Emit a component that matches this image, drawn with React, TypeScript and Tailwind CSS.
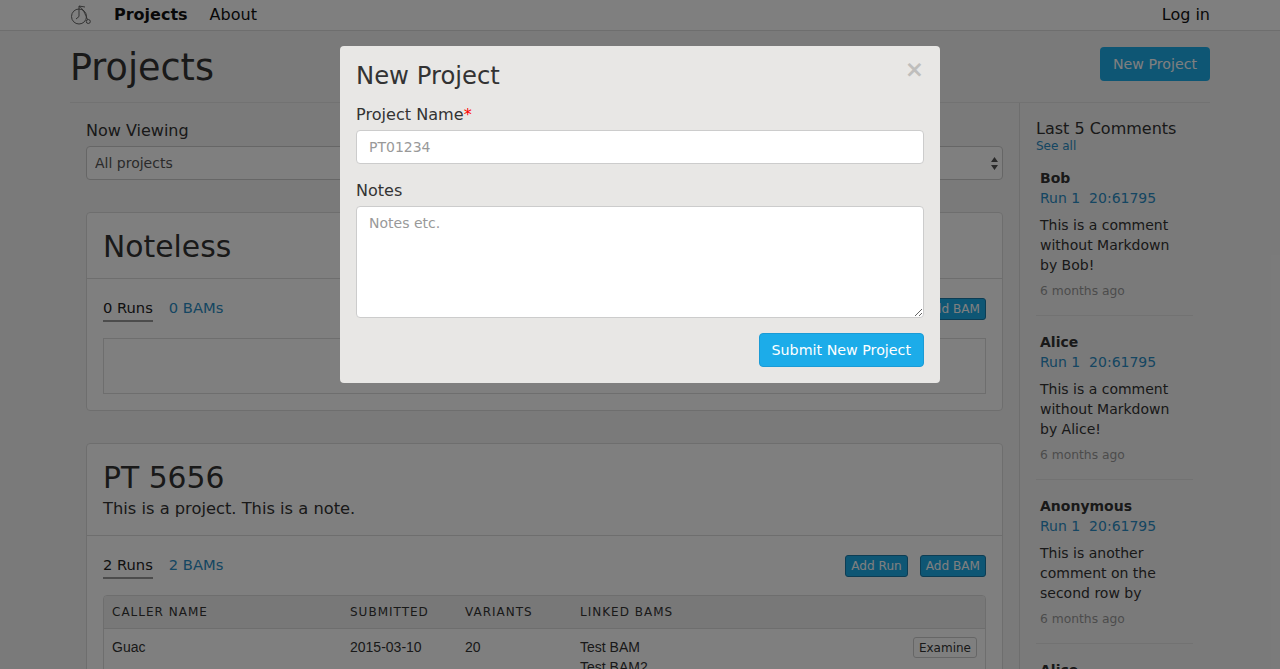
import { ReactNode } from 'react';

const comments = [
  { author: 'Bob', body: ['This is a comment', 'without Markdown', 'by Bob!'] },
  { author: 'Alice', body: ['This is a comment', 'without Markdown', 'by Alice!'] },
  { author: 'Anonymous', body: ['This is another', 'comment on the', 'second row by'] },
  { author: 'Alice', body: ['This is a comment', 'without Markdown', 'by Alice!'] },
];

function Logo() {
  return (
    <svg width="22" height="22" viewBox="0 0 22 22" fill="none" stroke="#555" strokeWidth="0.9">
      <circle cx="9" cy="12.5" r="7.5" />
      <circle cx="18.3" cy="17.5" r="2" />
      <path d="M9 12.5 L9 2 L15 3 M9 2.5 C13 4 15 10 17.5 15.5 M9 12.5 L6 15" />
    </svg>
  );
}

function SmallButton({ children }: { children: ReactNode }) {
  return (
    <button className="h-[22px] rounded-[3px] border border-[#1a7ba8] bg-[#1cace9] px-[5px] text-[12.1px] font-normal text-white">
      {children}
    </button>
  );
}

function Tabs({ runs, bams }: { runs: string; bams: string }) {
  return (
    <div className="flex gap-4 text-[14.7px] leading-[20px]">
      <span className="border-b-2 border-[#999] pb-[2px] text-[#222]">{runs}</span>
      <a className="text-[#2a8cc4]">{bams}</a>
    </div>
  );
}

function ProjectCard({
  title,
  note,
  runs,
  bams,
  children,
}: {
  title: string;
  note?: string;
  runs: string;
  bams: string;
  children: ReactNode;
}) {
  return (
    <section className="rounded-[4px] border border-[#ddd] bg-white">
      <div className="border-b border-[#ddd] px-4 pt-[14px] pb-[11px]">
        <h2 className="text-[29.8px] leading-[40px] text-[#333]">{title}</h2>
        {note && <p className="mt-[1px] mb-[5px] text-[16.3px] leading-[20px] text-[#333]">{note}</p>}
      </div>
      <div className="px-4 pt-[19px] pb-4">
        <div className="flex items-start justify-between">
          <Tabs runs={runs} bams={bams} />
          <div className="flex gap-3">
            <SmallButton>Add Run</SmallButton>
            <SmallButton>Add BAM</SmallButton>
          </div>
        </div>
        {children}
      </div>
    </section>
  );
}

export default function App() {
  return (
    <div className="relative h-[669px] overflow-hidden bg-[#f5f5f5] font-['DejaVu_Sans',sans-serif] text-[#333]">
      <nav className="h-[31px] border-b border-[#ddd] bg-white">
        <div className="mx-auto flex h-[30px] w-[1140px] items-center text-[16px] text-[#111]">
          <Logo />
          <a className="ml-[22px] font-bold">Projects</a>
          <a className="ml-[22px]">About</a>
          <a className="ml-auto">Log in</a>
        </div>
      </nav>

      <div className="mx-auto w-[1140px]">
        <header className="flex h-[72px] items-center justify-between border-b border-[#e5e5e5]">
          <h1 className="mt-[3px] text-[36.5px] leading-[40px] text-[#333]">Projects</h1>
          <button className="mt-[-5px] h-[34px] rounded-[4px] bg-[#1cace9] px-[13px] pt-[1px] text-[14.2px] font-normal text-white">
            New Project
          </button>
        </header>

        <div className="flex">
          <main className="w-[949px] shrink-0 px-4 pt-[18px]">
            <label className="block text-[16px] leading-[20px] text-[#333]">Now Viewing</label>
            <div className="relative mt-[5px]">
              <select className="h-[34px] w-full appearance-none rounded-[4px] border border-[#ccc] bg-white px-2 text-[14px] text-[#555]">
                <option>All projects</option>
              </select>
              <svg className="absolute top-[11px] right-[5px]" width="7" height="13" viewBox="0 0 7 13" fill="#555">
                <path d="M3.5 0 L7 5 L0 5 Z M0 8 L7 8 L3.5 13 Z" />
              </svg>
            </div>

            <div className="mt-[32px] flex flex-col gap-[32px]">
              <ProjectCard title="Noteless" runs="0 Runs" bams="0 BAMs">
                <div className="mt-4 h-[56px] border border-[#ddd]" />
              </ProjectCard>

              <ProjectCard title="PT 5656" note="This is a project. This is a note." runs="2 Runs" bams="2 BAMs">
                <div className="mt-[16px] overflow-hidden rounded-[4px] border border-[#ddd]">
                  <table className="w-full table-fixed text-left">
                    <thead className="bg-[#f0f0f0]">
                      <tr className="h-[32px] border-b border-[#ddd] text-[12px] tracking-[1px] text-[#333] uppercase">
                        <th className="w-[238px] pl-2 font-normal">Caller Name</th>
                        <th className="w-[115px] pl-2 font-normal">Submitted</th>
                        <th className="w-[115px] pl-2 font-normal">Variants</th>
                        <th className="pl-2 font-normal">Linked BAMs</th>
                        <th className="w-[82px]" />
                      </tr>
                    </thead>
                    <tbody className="font-['Liberation_Sans',sans-serif] text-[14px] leading-[20px] text-[#333]">
                      <tr className="align-top">
                        <td className="pt-[8px] pl-2">Guac</td>
                        <td className="pt-[8px] pl-2">2015-03-10</td>
                        <td className="pt-[8px] pl-2">20</td>
                        <td className="pt-[8px] pl-2">
                          <div>Test BAM</div>
                          <div>Test BAM2</div>
                        </td>
                        <td className="pt-[8px] pr-2 text-right">
                          <button className="h-[21px] rounded-[3px] border border-[#ccc] px-[5px] font-['DejaVu_Sans',sans-serif] text-[12px] leading-none">
                            Examine
                          </button>
                        </td>
                      </tr>
                    </tbody>
                  </table>
                </div>
              </ProjectCard>
            </div>
          </main>

          <aside className="min-h-[600px] flex-1 border-l border-[#ddd] pt-[16px] pr-[17px] pl-4">
            <h3 className="text-[16px] leading-[20px] text-[#333]">Last 5 Comments</h3>
            <a className="block text-[12px] leading-[14px] text-[#2a8cc4]">See all</a>
            <div className="mt-[15px]">
              {comments.map((comment, i) => (
                <div key={i} className="mb-[16px] border-b border-[#e5e5e5] pb-[15px] pl-1">
                  <div className="text-[14px] leading-[20px] font-bold text-[#333]">{comment.author}</div>
                  <a className="block text-[14px] leading-[20px] whitespace-pre text-[#2a8cc4]">Run 1  20:61795</a>
                  <p className="mt-[7px] text-[14px] leading-[20px] text-[#333]">
                    {comment.body.map((line) => (
                      <span key={line} className="block">
                        {line}
                      </span>
                    ))}
                  </p>
                  <div className="mt-[7px] text-[12.3px] leading-[18px] text-[#999]">6 months ago</div>
                </div>
              ))}
            </div>
          </aside>
        </div>
      </div>

      {/* backdrop + modal */}
      <div className="absolute inset-0 bg-black/50" />
      <div className="absolute top-[46px] left-[340px] h-[337px] w-[600px] rounded-[4px] bg-[#e8e7e5] px-4">
        <button className="absolute top-[11px] right-[16px] text-[23px] leading-[24px] font-bold text-[#bfbebc]">×</button>
        <h2 className="pt-[14px] text-[24.3px] leading-[32px] text-[#333]">New Project</h2>
        <label className="mt-[12px] block text-[16.1px] leading-[22px] text-[#333]">
          Project Name<span className="text-[#f00]">*</span>
        </label>
        <input
          placeholder="PT01234"
          className="mt-[4px] block h-[34px] w-full rounded-[4px] border border-[#ccc] bg-white px-3 text-[14px] placeholder:text-[#999]"
        />
        <label className="mt-[16px] block text-[16px] leading-[22px] text-[#333]">Notes</label>
        <textarea
          placeholder="Notes etc."
          className="mt-[4px] block h-[112px] w-full rounded-[4px] border border-[#ccc] bg-white px-3 py-[6px] text-[14px] placeholder:text-[#999]"
        />
        <div className="mt-[15px] flex justify-end">
          <button className="h-[34px] rounded-[4px] border border-[#1a9bd6] bg-[#1cace9] px-3 pt-[1px] text-[14.25px] text-white">
            Submit New Project
          </button>
        </div>
      </div>
    </div>
  );
}
